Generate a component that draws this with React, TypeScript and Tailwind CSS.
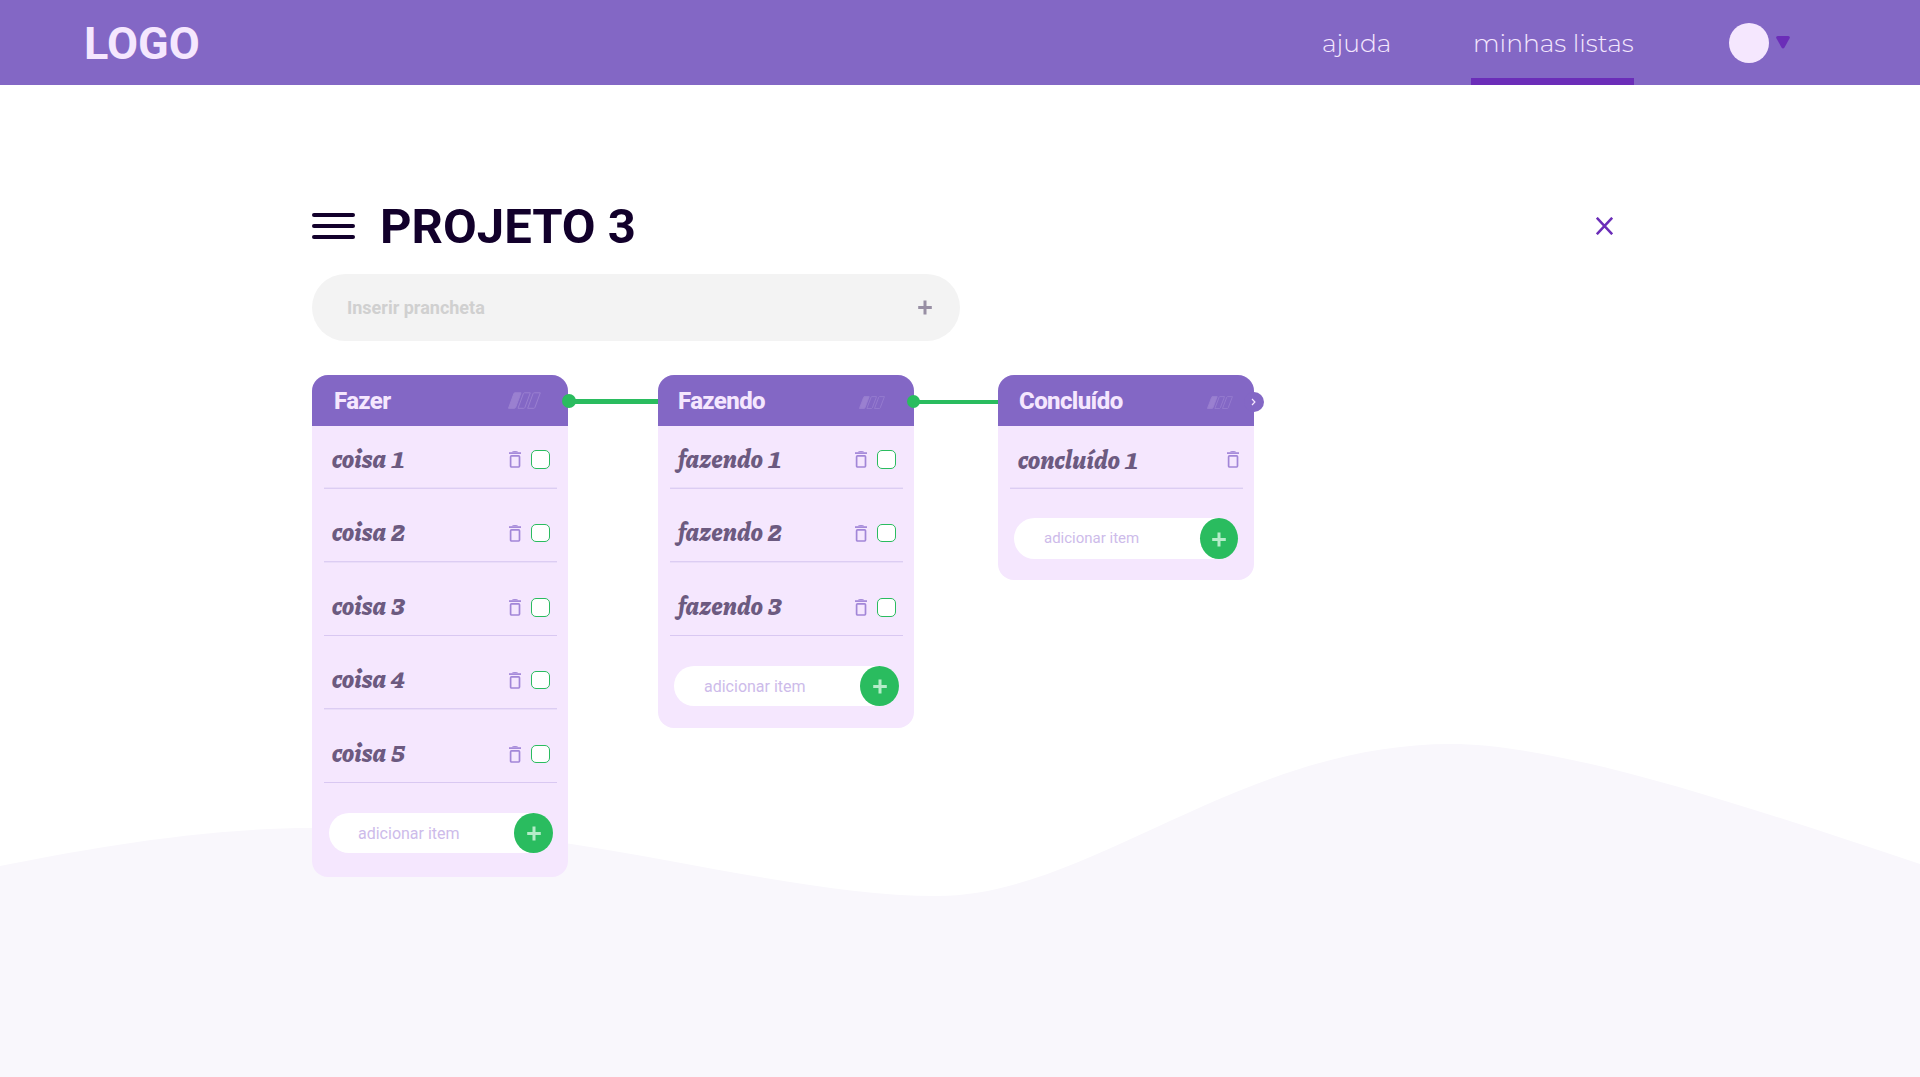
type Column = {
  title: string
  items: string[]
  addLabel: string
  card: string
  titleClass: string
  level: string
  row: string
  itemText: string
  form: string
  addText: string
  addButton: string
  plus: string
  checks: boolean
}

const columns: Column[] = [
  {
    title: 'Fazer',
    items: ['coisa 1', 'coisa 2', 'coisa 3', 'coisa 4', 'coisa 5'],
    addLabel: 'adicionar item',
    card: 'h-[502px]',
    titleClass: 'pl-[22px]',
    level: 'mr-[27px] h-[17px] w-[33px]',
    row: 'pr-[7px]',
    itemText: 'pb-[3px] pl-2',
    form: 'mt-[30px] ml-[17px] h-10 w-56',
    addText: 'pt-px pl-[29px] text-base',
    addButton: 'w-[39px]',
    plus: 'ml-px',
    checks: true,
  },
  {
    title: 'Fazendo',
    items: ['fazendo 1', 'fazendo 2', 'fazendo 3'],
    addLabel: 'adicionar item',
    card: 'ml-[90px] h-[353px]',
    titleClass: 'pl-5',
    level: 'mt-[3px] mr-[29px] h-[13px] w-[26px]',
    row: 'pr-[7px]',
    itemText: 'pb-[3px] pl-2',
    form: 'mt-[30px] ml-4 h-10 w-[225px]',
    addText: 'pt-px pl-[30px] text-base',
    addButton: 'w-[39px]',
    plus: 'ml-px',
    checks: true,
  },
  {
    title: 'Concluído',
    items: ['concluído 1'],
    addLabel: 'adicionar item',
    card: 'ml-[84px] h-[205px]',
    titleClass: 'pl-[21px]',
    level: 'mt-[3px] mr-[21px] h-[13px] w-[26px]',
    row: 'pr-[4px]',
    itemText: 'pb-px pl-2',
    form: 'mt-[29px] ml-4 h-[41px] w-56',
    addText: 'pl-[30px] text-[15px]',
    addButton: 'w-[38px]',
    plus: '',
    checks: false,
  },
]

function LevelIcon({ className }: { className: string }) {
  return (
    <svg className={className} viewBox="0 0 33 17" preserveAspectRatio="none" stroke="#9a80d0" fill="none">
      <path d="M0.5 16.3 5.9 1.5Q6.1.8 6.9.8H13L7.6 15.5Q7.3 16.3 6.4 16.3Z" fill="#9a80d0" />
      <path d="M10 16.3 15.4 1.5Q15.7.8 16.5.8H22.3L16.9 15.5Q16.6 16.3 15.8 16.3Z" />
      <path d="M19.7 16.3 25.1 1.5Q25.4.8 26.2.8H32.3L26.9 15.5Q26.6 16.3 25.8 16.3Z" />
    </svg>
  )
}

function TrashIcon() {
  return (
    <svg className="h-[17px] w-3 shrink-0" viewBox="0 0 12 17" fill="none" stroke="#a286d8">
      <path d="M3.2 1.2Q3.4.6 4.2.6H7.8Q8.6.6 8.8 1.2" strokeWidth="1" />
      <path d="M0 2.1H12" strokeWidth="1.7" />
      <rect x="1.6" y="4.8" width="8.9" height="11.2" rx=".9" strokeWidth="1.7" />
    </svg>
  )
}

function Plus({ className }: { className: string }) {
  return (
    <svg className={className} viewBox="0 0 14 15" stroke="currentColor" fill="none">
      <path d="M7 .4V14.6M.2 7.5H13.8" strokeWidth="3" />
    </svg>
  )
}

function Connector({ index }: { index: number }) {
  if (index === 0)
    return (
      <div className="absolute top-[19px] left-[250px] flex h-[14px] w-[96px] items-center">
        <span className="size-[14px] shrink-0 rounded-full bg-[#2abc5f]" />
        <span className="mt-px -ml-1 h-[5px] flex-1 bg-[#2abc5f]" />
      </div>
    )
  if (index === 1)
    return (
      <div className="absolute top-5 left-[249px] flex h-[13px] w-[91px] items-center">
        <span className="size-[13px] shrink-0 rounded-full bg-[#2abc5f]" />
        <span className="mt-px -ml-1 h-1 flex-1 bg-[#2abc5f]" />
      </div>
    )
  return (
    <div className="absolute top-[17px] left-[246px] size-5 rounded-full bg-[#8367c5]">
      <svg className="size-5" viewBox="0 0 20 20" fill="none" stroke="#f5e7fe" strokeWidth="1.2">
        <path d="M8 7 10.9 10 8 13" />
      </svg>
    </div>
  )
}

const separators = [
  'bg-[#dccdf3] shadow-[0_-1px_0_#eaddf9]',
  'bg-[#dccdf3] shadow-[0_1px_0_#eaddf9]',
  'bg-[#d9c8f2]',
  'bg-[#dccdf3] shadow-[0_1px_0_#eaddf9]',
  'bg-[#d9c8f2]',
]

const rowHeights = ['h-[63px]', 'h-[73px]', 'h-[74px]', 'h-[73px]', 'h-[74px]']

const rowPads = ['', 'pt-px', 'pt-px', 'pt-px', 'pt-px']
const checkHeights = ['h-[19px]', 'h-[18px]', 'h-[19px]', 'h-[18px]', 'h-[18px]']

function Card({ column, index }: { column: Column; index: number }) {
  return (
    <section className={`relative w-64 shrink-0 rounded-2xl bg-[#f5e7fe] ${column.card}`}>
      <header className="flex h-[51px] items-center justify-between rounded-t-2xl bg-[#8367c5]">
        <h2
          className={`text-[24px] leading-none font-extrabold tracking-[-0.6px] text-[#f5e7fe] ${column.titleClass}`}
        >
          {column.title}
        </h2>
        <LevelIcon className={column.level} />
      </header>
      <ul className="pr-[11px] pl-3">
        {column.items.map((item, i) => (
          <li key={item} className={`flex flex-col justify-end ${rowHeights[i]}`}>
            <div className={`flex h-[57px] items-center ${column.row} ${rowPads[i]}`}>
              <span
                className={`flex-1 font-[Piazzolla,'Liberation_Serif',serif] text-[25px] leading-none font-extrabold tracking-[0.2px] whitespace-nowrap text-[#6c5a80] italic tabular-nums [word-spacing:1.5px] ${column.itemText}`}
              >
                {item}
              </span>
              <TrashIcon />
              {column.checks && (
                <span
                  className={`ml-[10px] w-[19px] rounded-[5px] border border-[#2abc5f] bg-white ${checkHeights[i]}`}
                />
              )}
            </div>
            <div className={`h-px ${separators[i]}`} />
          </li>
        ))}
      </ul>
      <div className={`flex items-center justify-between rounded-full bg-white ${column.form}`}>
        <span className={`leading-none text-[#cdbbea] ${column.addText}`}>{column.addLabel}</span>
        <button
          className={`flex h-full items-center justify-center rounded-[50%] bg-[#2abc5f] text-[#b5ecc9] ${column.addButton}`}
        >
          <Plus className={`mt-px h-[15px] w-[14px] ${column.plus}`} />
        </button>
      </div>
      <Connector index={index} />
    </section>
  )
}

export default function App() {
  return (
    <div className="relative h-[1077px] w-[1920px] overflow-hidden bg-white font-[Roboto,sans-serif]">
      <svg className="absolute inset-0 h-full w-full" viewBox="0 0 1920 1077" fill="#f9f7fc">
        <path d="M0 866C80 850 200 828 312 828C400 828 484 831 568 843.5C700 864 830 896 937 896C1090 896 1240 744 1451 744C1560 744 1740 804 1920 864V1077H0Z" />
      </svg>
      <div className="relative flex flex-col">
        <header className="flex h-[85px] bg-[#8367c5] text-[#f5e7fe]">
          <div className="flex w-[1322px] items-center pt-px pl-[84px] text-[45px] leading-none font-bold">
            <span>LOGO</span>
          </div>
          <nav className="flex font-[Montserrat,Inter,sans-serif] text-[25px] leading-none font-light">
            <a className="flex h-full w-[149px] items-center pt-px">ajuda</a>
            <a className="flex h-full w-[163px] items-center border-b-[7px] border-[#6b2db8] pt-2 pl-[2px] whitespace-nowrap">
              minhas listas
            </a>
          </nav>
          <div className="ml-[95px] flex items-center gap-[7px] pt-px">
            <span className="size-10 rounded-full bg-[#f5e7fe]" />
            <svg className="mb-[2px] h-[13px] w-[14px]" viewBox="0 0 14 13" fill="#6b2db8">
              <path d="M1.8 0H12.2Q14.5.3 13.6 2.2L8.5 11.5Q7 13.6 5.5 11.5L.4 2.2Q-.5.3 1.8 0Z" />
            </svg>
          </div>
        </header>
        <main className="mt-[118px] ml-[312px] w-[1301px]">
          <div className="flex h-[46px] items-center">
            <div className="flex w-[43px] flex-col gap-[6.5px]">
              <span className="h-[4.4px] rounded-full bg-[#12002b]" />
              <span className="h-[4.4px] rounded-full bg-[#12002b]" />
              <span className="h-[4.4px] rounded-full bg-[#12002b]" />
            </div>
            <h1 className="ml-[25px] pt-px text-[49px] leading-none font-bold text-[#12002b]">PROJETO 3</h1>
            <svg className="ml-auto h-[18px] w-[17px]" viewBox="0 0 17 18" fill="none" stroke="#6b2db8" strokeWidth="2.6">
              <path d="M.8.8 16.2 17.2M16.2.8.8 17.2" />
            </svg>
          </div>
          <div className="mt-[25px] flex h-[67px] w-[648px] items-center justify-between rounded-full bg-[#f3f3f3] pr-[28px] pl-[35px]">
            <span className="text-[18px] leading-none font-bold text-[#d0d0d0]">Inserir prancheta</span>
            <Plus className="h-[15px] w-[14px] text-[#988fa4]" />
          </div>
          <div className="mt-[34px] flex items-start">
            {columns.map((column, i) => (
              <Card key={column.title} column={column} index={i} />
            ))}
          </div>
        </main>
      </div>
    </div>
  )
}
